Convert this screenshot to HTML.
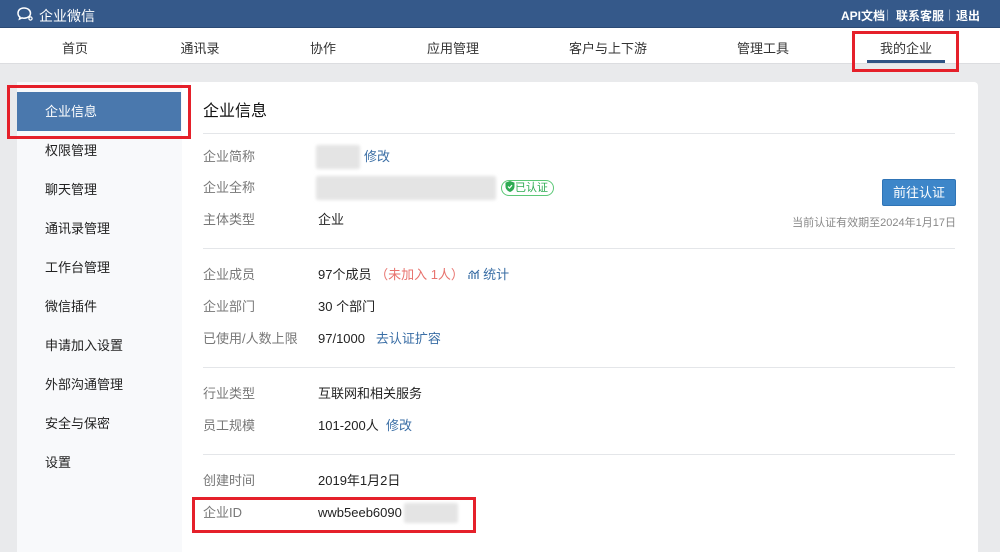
<!DOCTYPE html>
<html><head><meta charset="utf-8"><style>
*{margin:0;padding:0;box-sizing:border-box}
body{width:1000px;height:540px;overflow:hidden;background:#e9eaec;font-family:"Liberation Sans","Noto Sans CJK SC",sans-serif;font-size:13px;color:#222;position:relative}
.a{position:absolute;white-space:nowrap}
.top{left:0;top:0;width:1000px;height:28px;background:#35598a;border-bottom:1px solid #2b4a75}
.nav{left:0;top:28px;width:1000px;height:36px;background:#fff;border-bottom:1px solid #dcdde0}
.nav span{position:absolute;top:10px;font-size:13px;color:#333;transform:translateX(-50%)}
.side{left:17px;top:82px;width:165px;height:470px;background:#f8f9fb}
.side span{position:absolute;left:28px;font-size:13px;color:#222;line-height:20px;margin-top:-10px}
.main{left:182px;top:82px;width:796px;height:470px;background:#fff;border-radius:0 4px 0 0}
.sep{position:absolute;left:21px;width:752px;height:1px;background:#e4e6e9}
.l{position:absolute;left:21px;color:#777;line-height:20px;margin-top:-10px;white-space:nowrap}
.v{position:absolute;left:136px;color:#222;line-height:20px;margin-top:-10px;white-space:nowrap}
.lk{color:#3a6ea5}
.red{position:absolute;border:3px solid #e5202a}
.blur{position:absolute;background:#e4e4e4;border-radius:2px;filter:blur(1.5px)}
</style></head><body>
<div class="a top">
<svg class="a" style="left:16px;top:6px" width="18" height="16" viewBox="0 0 18 16"><path d="M8 2C4 2 2 4.5 2 7.2c0 1.6.8 3 2 3.9L3.5 13l2.3-1.1c.7.2 1.4.3 2.2.3 4 0 6.5-2.4 6.5-5S12 2 8 2z" fill="none" stroke="#fff" stroke-width="1.5"/><circle cx="14.5" cy="12.5" r="1.6" fill="none" stroke="#fff" stroke-width="1.2"/></svg>
<span class="a" style="left:39px;top:6px;color:#fff;font-size:14px">企业微信</span>
<span class="a" style="left:841px;top:7px;color:#fff;font-size:12px;font-weight:bold">API文档</span>
<span class="a" style="left:886px;top:7px;color:#8fa6c4;font-size:12px">|</span>
<span class="a" style="left:896px;top:7px;color:#fff;font-size:12px;font-weight:bold">联系客服</span>
<span class="a" style="left:948px;top:7px;color:#8fa6c4;font-size:12px">|</span>
<span class="a" style="left:956px;top:7px;color:#fff;font-size:12px;font-weight:bold">退出</span>
</div>
<div class="a nav">
<span style="left:75px">首页</span><span style="left:200px">通讯录</span><span style="left:323px">协作</span><span style="left:453px">应用管理</span><span style="left:608px">客户与上下游</span><span style="left:763px">管理工具</span><span style="left:906px">我的企业</span>
<div class="a" style="left:867px;top:32px;width:78px;height:3px;background:#2f5384"></div>
</div>
<div class="a side">
<div class="a" style="left:0;top:10px;width:164px;height:39px;background:#4a78ad"></div>
<span style="top:30px;color:#fff">企业信息</span>
<span style="top:69px">权限管理</span><span style="top:108px">聊天管理</span><span style="top:147px">通讯录管理</span><span style="top:186px">工作台管理</span><span style="top:225px">微信插件</span><span style="top:264px">申请加入设置</span><span style="top:303px">外部沟通管理</span><span style="top:342px">安全与保密</span><span style="top:381px">设置</span>
</div>
<div class="a main">
<div class="a" style="left:21px;top:15px;font-size:16px;color:#111">企业信息</div>
<div class="sep" style="top:51px"></div>
<div class="l" style="top:75px">企业简称</div>
<div class="blur" style="left:134px;top:63px;width:44px;height:24px"></div>
<div class="v lk" style="top:75px;left:182px">修改</div>
<div class="l" style="top:106px">企业全称</div>
<div class="blur" style="left:134px;top:94px;width:180px;height:24px"></div>
<div class="a" style="left:319px;top:98px;border:1px solid #5cc877;border-radius:9px;color:#2eab52;font-size:11px;padding:0 5px 0 3px;height:16px;line-height:14px"><svg width="10" height="11" viewBox="0 0 10 11" style="vertical-align:-1px"><path d="M5 0L9.5 1.6V5.5C9.5 8 7.5 10 5 11 2.5 10 .5 8 .5 5.5V1.6z" fill="#2eab52"/><path d="M3 5.5l1.5 1.5 2.5-2.8" stroke="#fff" stroke-width="1.2" fill="none"/></svg>已认证</div>
<div class="l" style="top:138px">主体类型</div><div class="v" style="top:138px">企业</div>
<div class="a" style="left:700px;top:97px;width:74px;height:27px;background:#3d86c9;border:1px solid #2f74b6;border-radius:2px;color:#fff;text-align:center;line-height:25px;font-size:13px">前往认证</div>
<div class="a" style="right:22px;top:132px;font-size:11px;color:#888">当前认证有效期至2024年1月17日</div>
<div class="sep" style="top:166px"></div>
<div class="l" style="top:193px">企业成员</div><div class="v" style="top:193px">97个成员 <span style="color:#e8736e">（未加入 1人）</span> <span class="lk"><svg width="12" height="11" viewBox="0 0 12 11" style="vertical-align:-1px"><path d="M1 10V6M4 10V4M7 10V6M10 10V3M1 5l3-3 3 3 4-4" stroke="#3a6ea5" stroke-width="1.2" fill="none"/></svg> 统计</span></div>
<div class="l" style="top:225px">企业部门</div><div class="v" style="top:225px">30 个部门</div>
<div class="l" style="top:257px">已使用/人数上限</div><div class="v" style="top:257px">97/1000 &nbsp; <span class="lk">去认证扩容</span></div>
<div class="sep" style="top:285px"></div>
<div class="l" style="top:312px">行业类型</div><div class="v" style="top:312px">互联网和相关服务</div>
<div class="l" style="top:344px">员工规模</div><div class="v" style="top:344px">101-200人 &nbsp;<span class="lk">修改</span></div>
<div class="sep" style="top:372px"></div>
<div class="l" style="top:399px">创建时间</div><div class="v" style="top:399px">2019年1月2日</div>
<div class="l" style="top:431px">企业ID</div><div class="v" style="top:431px">wwb5eeb6090</div>
<div class="blur" style="left:222px;top:421px;width:54px;height:20px"></div>
</div>
<div class="red" style="left:7px;top:85px;width:184px;height:54px"></div>
<div class="red" style="left:852px;top:31px;width:107px;height:41px"></div>
<div class="red" style="left:192px;top:497px;width:284px;height:36px"></div>
</body></html>
